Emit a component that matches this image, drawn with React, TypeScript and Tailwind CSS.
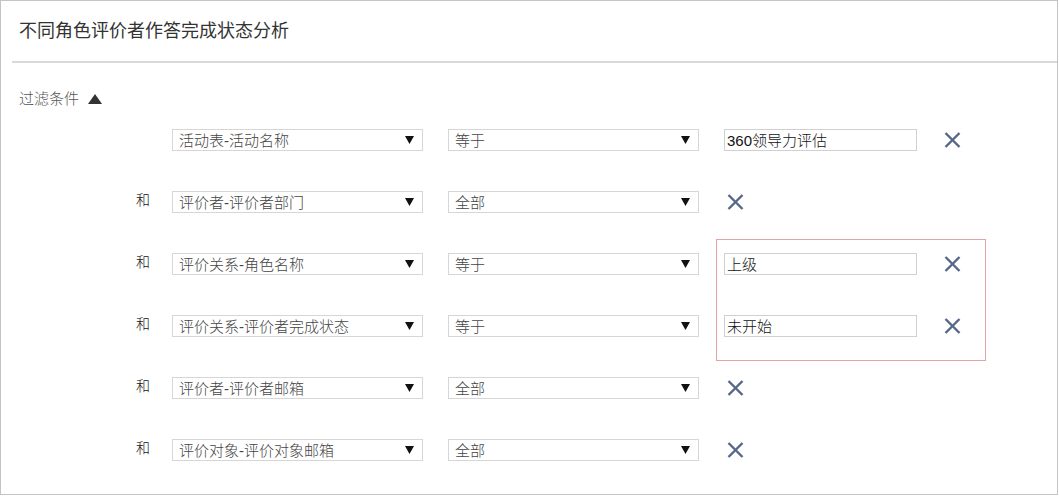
import React from 'react';

interface FilterRow {
  join: string;
  field: string;
  op: string;
  value?: string;
}

const rows: FilterRow[] = [
  { join: '', field: '活动表-活动名称', op: '等于', value: '360领导力评估' },
  { join: '和', field: '评价者-评价者部门', op: '全部' },
  { join: '和', field: '评价关系-角色名称', op: '等于', value: '上级' },
  { join: '和', field: '评价关系-评价者完成状态', op: '等于', value: '未开始' },
  { join: '和', field: '评价者-评价者邮箱', op: '全部' },
  { join: '和', field: '评价对象-评价对象邮箱', op: '全部' },
];

const FONT = "font-['Liberation_Sans','Noto_Sans_CJK_SC',sans-serif]";

const Caret = () => (
  <svg width="9" height="8" viewBox="0 0 9 8" className="shrink-0">
    <polygon points="0,0 9,0 4.5,8" fill="#111" />
  </svg>
);

const RemoveIcon = () => (
  <svg width="17" height="16" viewBox="0 0 17 16" className="shrink-0">
    <path d="M1.5 1 L15.5 15 M15.5 1 L1.5 15" stroke="#56688a" strokeWidth="2.4" strokeLinecap="butt" />
  </svg>
);

const FakeSelect: React.FC<{ label: string }> = ({ label }) => (
  <div className="w-[251px] h-[22px] border border-[#d6d6d6] bg-white flex items-center justify-between pl-[6px] pr-[8px]">
    <span className="text-[15px] leading-none font-light text-[#444]">{label}</span>
    <Caret />
  </div>
);

export default function App() {
  return (
    <div className={`w-[1058px] h-[495px] border border-[#c4c4c4] bg-white relative ${FONT}`}>
      {/* Header */}
      <div className="ml-[11px] h-[62px] border-b-2 border-[#d9d9d9] flex items-center pl-[7px]">
        <h2 className="text-[18px] leading-none text-[#333]">不同角色评价者作答完成状态分析</h2>
      </div>

      {/* Filter toggle */}
      <div className="pl-[18px] pt-[28px] flex items-center gap-[9px]">
        <span className="text-[15px] leading-[16px] font-light text-[#555]">过滤条件</span>
        <svg width="14" height="10" viewBox="0 0 14 10">
          <polygon points="7,0 14,10 0,10" fill="#333" />
        </svg>
      </div>

      {/* Filter rows */}
      <div className="pt-[22px] flex flex-col gap-[40px]">
        {rows.map((row, i) => (
          <div key={i} className="flex items-center h-[22px] pl-[135px]">
            <span className="w-[36px] text-[14px] font-light text-[#111] leading-none -mt-[4px]">{row.join}</span>
            <FakeSelect label={row.field} />
            <div className="ml-[25px]">
              <FakeSelect label={row.op} />
            </div>
            {row.value !== undefined ? (
              <>
                <div className="ml-[25px] w-[193px] h-[22px] border border-[#d0d0d0] flex items-center pl-[2px]">
                  <span className="text-[15px] leading-none font-light text-[#111]">{row.value}</span>
                </div>
                <div className="ml-[27px]">
                  <RemoveIcon />
                </div>
              </>
            ) : (
              <div className="ml-[28px]">
                <RemoveIcon />
              </div>
            )}
          </div>
        ))}
      </div>

      {/* Highlight annotation */}
      <div className="absolute left-[715px] top-[238px] w-[270px] h-[122px] border border-[#e2a3a6] pointer-events-none" />
    </div>
  );
}
